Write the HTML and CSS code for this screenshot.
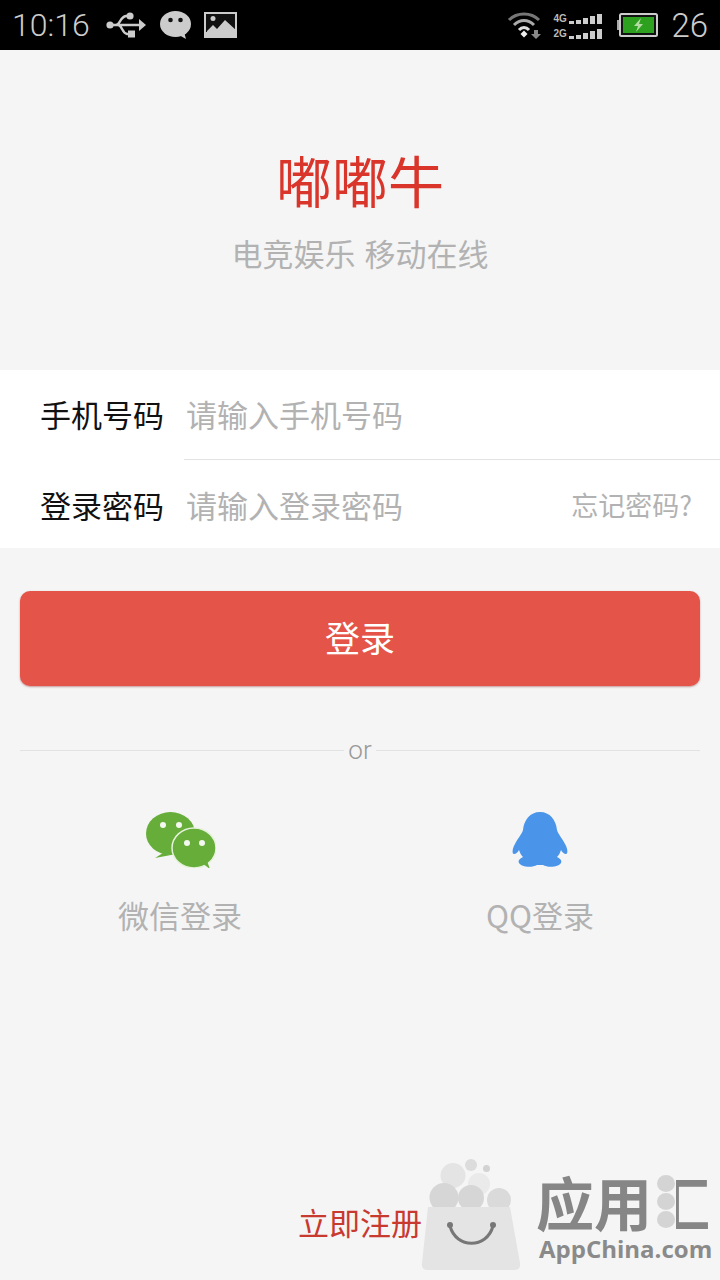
FILE: index.html
```html
<!DOCTYPE html>
<html>
<head>
    <meta charset="UTF-8">
    <meta name="viewport" content="width=device-width, initial-scale=1.0">
    <title>嘟嘟牛</title>
    <link rel="stylesheet" href="styles.css">
</head>
<body>
<div class="page">

    <div class="status-bar">
        <span class="clock">10:16</span>
        <svg class="st-usb" width="40" height="26" viewBox="0 0 40 26">
            <path d="M3 13H36M10 13C14 13 14 5 20 4H23M12 13C16 13 16 21 21 22H24" fill="none" stroke="#ccc" stroke-width="2.4"/>
            <circle cx="4" cy="13" r="3.6" fill="#ccc"/>
            <circle cx="24" cy="4" r="3.6" fill="#ccc"/>
            <rect x="22" y="18.500" width="7" height="7" fill="#ccc"/>
            <path d="M33 7L40 13L33 19Z" fill="#ccc"/>
        </svg>
        <svg class="st-chat" width="31" height="28" viewBox="0 0 31 28">
            <ellipse cx="15.500" cy="13" rx="15.500" ry="13" fill="#ccc"/>
            <path d="M19 24L26 28L24 21Z" fill="#ccc"/>
            <circle cx="10.500" cy="9" r="2.300" fill="#111"/>
            <circle cx="20.500" cy="9" r="2.300" fill="#111"/>
        </svg>
        <svg class="st-pic" width="33" height="26" viewBox="0 0 33 26">
            <rect width="33" height="26" fill="#ccc"/>
            <rect x="2" y="2" width="29" height="18" fill="#111"/>
            <circle cx="9" cy="6.500" r="2.500" fill="#ccc"/>
            <path d="M3 26V19L9 13L13 17L21 8L33 19V26Z" fill="#ccc"/>
        </svg>

        <div class="status-right">
            <svg class="st-wifi" width="36" height="28" viewBox="0 0 36 28">
                <path d="M2 9C10 1 24 1 32 9" fill="none" stroke="#777" stroke-width="3"/>
                <path d="M7 14C13 8 21 8 27 14" fill="none" stroke="#aaa" stroke-width="3"/>
                <path d="M12 19C15 15.500 19 15.500 22 19" fill="none" stroke="#ddd" stroke-width="3"/>
                <path d="M13.500 23L17 19.500L20.500 23L17 26.500Z" fill="#eee"/>
                <path d="M27 19H31V23H34L29 28L24 23H27Z" fill="#888"/>
            </svg>
            <div class="signal">
                <div class="signal-row">
                    <span class="net">4G</span>
                    <i class="b1"></i><i class="b2"></i><i class="b3"></i><i class="b4"></i><i class="b5"></i>
                </div>
                <div class="signal-row">
                    <span class="net">2G</span>
                    <i class="b1"></i><i class="b2"></i><i class="b3"></i><i class="b4"></i><i class="b5"></i>
                </div>
            </div>
            <svg class="st-battery" width="41" height="24" viewBox="0 0 41 24">
                <rect x="0" y="7" width="2" height="10" fill="#aaa"/>
                <rect x="3" y="1" width="37" height="22" rx="1.500" fill="#111" stroke="#ccc" stroke-width="2"/>
                <rect x="6" y="4" width="31" height="16" fill="#2ea01f"/>
                <path d="M24 5L17 13H21L19 19L26 11H22Z" fill="#b5dca5"/>
            </svg>
            <span class="level">26</span>
        </div>
    </div>

    <div class="brand">
        <h1 class="brand-name">嘟嘟牛</h1>
        <p class="brand-sub">电竞娱乐 移动在线</p>
    </div>

    <div class="form">
        <div class="form-row form-row-first">
            <span class="form-label">手机号码</span>
            <span class="form-field">请输入手机号码</span>
        </div>
        <div class="form-row">
            <span class="form-label">登录密码</span>
            <span class="form-field">请输入登录密码</span>
            <span class="forgot">忘记密码?</span>
        </div>
    </div>

    <button type="button" class="login-btn">登录</button>

    <div class="or-line"><span>or</span></div>

    <div class="social">
        <div class="social-item">
            <svg class="icon-wechat" width="70" height="58" viewBox="0 0 70 58">
                <path d="M9 48L17 43L25 45Z" fill="#66ad3a"/>
                <ellipse cx="24.500" cy="23.500" rx="24.500" ry="21.500" fill="#66ad3a"/>
                <ellipse cx="48" cy="38" rx="22" ry="20" fill="#66ad3a" stroke="#e4f2da" stroke-width="1.500"/>
                <path d="M56 53L64 59L61 51Z" fill="#66ad3a"/>
                <circle cx="17" cy="15" r="3" fill="#f4f8ef"/>
                <circle cx="33" cy="15" r="3" fill="#f4f8ef"/>
                <circle cx="41" cy="33" r="3" fill="#f4f8ef"/>
                <circle cx="56" cy="33" r="3" fill="#f4f8ef"/>
            </svg>
            <span class="social-name">微信登录</span>
        </div>
        <div class="social-item">
            <svg width="56" height="58" viewBox="0 0 56 58">
                <path d="M28 2C38 2 44 10 45 20C46 24 50 28 53 34C56 39 56 44 54 44C52 44 50 42 49 40C48 43 47 45 45 47C49 49 50 51 49 53C47 57 36 58 31 55H25C20 58 9 57 7 53C6 51 7 49 11 47C9 45 8 43 7 40C6 42 4 44 2 44C0 44 0 39 3 34C6 28 10 24 11 20C12 10 18 2 28 2Z" fill="#4a95ea"/>
            </svg>
            <span class="social-name">QQ登录</span>
        </div>
    </div>

    <a class="register">立即注册</a>

    <!-- watermark sits over the page -->
    <div class="watermark">
        <svg class="wm-bag" width="100" height="114" viewBox="0 0 100 114">
            <circle cx="58" cy="27" r="11" fill="#eaeaea"/>
            <circle cx="50" cy="8" r="6" fill="#dcdcdc"/>
            <circle cx="65.500" cy="11.500" r="3.500" fill="#d2d2d2"/>
            <circle cx="32" cy="18.500" r="12.500" fill="#e4e4e4"/>
            <circle cx="23" cy="40.500" r="14.500" fill="#d6d6d6"/>
            <circle cx="50" cy="41" r="13" fill="#d6d6d6"/>
            <circle cx="78" cy="43" r="12" fill="#dadada"/>
            <path d="M7 50H89L99 106Q100 113 93 113H7Q0 113 1 106Z" fill="#e4e4e4"/>
            <path d="M29 69C35 92 66 92 72 69" fill="none" stroke="#777" stroke-width="3"/>
            <circle cx="29" cy="68" r="3" fill="#777"/>
            <circle cx="72" cy="68" r="3" fill="#777"/>
        </svg>
        <div class="wm-text">
            <div class="wm-cn">应用<span class="wm-hui">汇<i class="wm-dots"><b></b><b></b><b></b></i></span></div>
            <div class="wm-en">AppChina.com</div>
        </div>
    </div>

</div>
</body>
</html>
```

FILE: styles.css
```css
* {
    box-sizing: border-box;
}

body {
    margin: 0;
    background-color: #f5f5f5;
    font-family: "Noto Sans CJK SC", "Noto Sans", sans-serif;
}

.page {
    position: relative;
    width: 720px;
    height: 1280px;
    overflow: hidden;
    display: flex;
    flex-direction: column;
    background-color: #f5f5f5;
}

/* status bar */
.status-bar {
    height: 50px;
    background-color: #000;
    display: flex;
    align-items: center;
    padding: 0 12px;
    color: #ccc;
}

.clock {
    font-family: Roboto, sans-serif;
    font-weight: 300;
    font-size: 32px;
    width: 94px;
}

.st-chat {
    margin-left: 14px;
}

.st-pic {
    margin-left: 13px;
}

.status-right {
    margin-left: auto;
    display: flex;
    align-items: center;
}

.signal {
    margin-left: 10px;
    padding-top: 2px;
    display: flex;
    flex-direction: column;
    gap: 4px;
}

.signal-row {
    display: flex;
    align-items: flex-end;
    gap: 2px;
    height: 11px;
}

.net {
    font-family: "Liberation Sans", sans-serif;
    font-size: 10px;
    font-weight: 700;
    line-height: 11px;
    width: 14px;
    color: #bbb;
}

.signal-row i {
    width: 5px;
    background-color: #ccc;
}

.b1 { height: 3px; }
.b2 { height: 4px; }
.b3 { height: 6px; }
.b4 { height: 8px; }
.b5 { height: 10px; }

.st-battery {
    margin-left: 15px;
}

.level {
    font-family: Roboto, sans-serif;
    font-weight: 300;
    font-size: 33px;
    margin-left: 13px;
}

/* title */
.brand {
    text-align: center;
    padding-top: 99px;
}

.brand-name {
    margin: 0;
    font-size: 56px;
    font-weight: 400;
    line-height: 60px;
    color: #d9352b;
}

.brand-sub {
    margin: 24px 0 0;
    font-size: 31px;
    line-height: 40px;
    word-spacing: 2px;
    color: #b2b2b2;
}

/* form */
.form {
    margin-top: 97px;
    background-color: #fff;
}

.form-row {
    height: 88px;
    display: flex;
    align-items: center;
    padding: 0 28px 0 40px;
}

.form-row-first {
    height: 90px;
    padding-bottom: 3px;
    background: linear-gradient(#e2e2e2, #e2e2e2) no-repeat 184px 100% / 536px 1px;
}

.form-label {
    width: 146px;
    font-size: 31px;
    color: #111;
    white-space: nowrap;
}

.form-field {
    font-size: 31px;
    color: #b2b2b2;
}

.forgot {
    margin-left: auto;
    font-size: 27px;
    color: #b2b2b2;
}

/* login button */
.login-btn {
    display: block;
    margin: 43px 20px 0;
    height: 95px;
    padding: 0 0 4px;
    border: none;
    border-radius: 10px;
    background-color: #e55448;
    box-shadow: 0 1px 2px rgba(150, 60, 60, 0.5);
    color: #fff;
    font-family: inherit;
    font-size: 35px;
}

.or-line {
    margin: 49px 20px 0;
    height: 30px;
    display: flex;
    align-items: center;
    background: linear-gradient(#e2e2e2, #e2e2e2) no-repeat 0 50% / 100% 1px;
    justify-content: center;
}

.or-line span {
    padding: 0 4px;
    background-color: #f5f5f5;
    font-family: Roboto, sans-serif;
    font-weight: 300;
    font-size: 26px;
    line-height: 30px;
    color: #999;
}

/* third party login */
.social {
    margin-top: 45px;
    display: flex;
}

.social-item {
    width: 360px;
    display: flex;
    flex-direction: column;
    align-items: center;
    gap: 27px;
}

.icon-wechat {
    margin-left: 2px;
}

.social-name {
    font-size: 31px;
    line-height: 40px;
    color: #b2b2b2;
}

.register {
    margin-top: auto;
    margin-bottom: 35px;
    text-align: center;
    font-size: 31px;
    line-height: 46px;
    color: #c8392f;
}

/* watermark */
.watermark {
    position: absolute;
    left: 421px;
    top: 1157px;
    display: flex;
}

.wm-text {
    margin-left: 15px;
    padding-top: 11px;
}

.wm-cn {
    font-size: 58px;
    font-weight: 700;
    line-height: 66px;
    color: #868686;
    white-space: nowrap;
}

.wm-hui {
    position: relative;
    display: inline-block;
}

/* covers the water radical of the glyph with the logo's three dots */
.wm-dots {
    position: absolute;
    left: 0;
    top: 0;
    width: 24px;
    height: 100%;
    padding-left: 5px;
    background-color: #f5f5f5;
    display: flex;
    flex-direction: column;
    align-items: flex-start;
    justify-content: center;
    gap: 1px;
}

.wm-dots b {
    width: 18px;
    height: 17px;
    border-radius: 50%;
    background-color: #d4d4d4;
}

.wm-en {
    margin-top: 3px;
    margin-left: 3px;
    font-family: "Open Sans", sans-serif;
    font-weight: 700;
    font-size: 24px;
    line-height: 24px;
    color: #8a8a8a;
}
```
